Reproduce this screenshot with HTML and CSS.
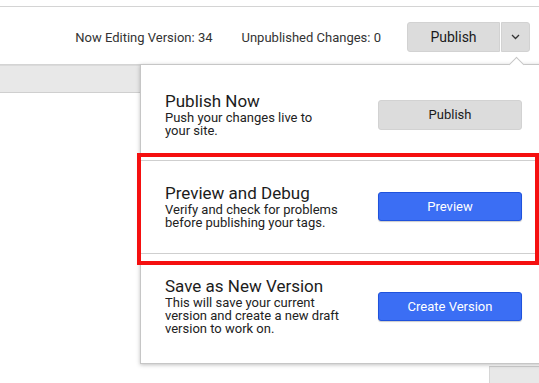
FILE: index.html
```html
<!DOCTYPE html>
<html lang="en">
<head>
  <meta charset="UTF-8" />
  <meta name="viewport" content="width=device-width, initial-scale=1.0"/>
  <title>Publish</title>
  <link rel="stylesheet" href="styles.css">
</head>
<body>
  <div class="page">
    <header class="topbar">
      <span class="status">Now Editing Version: 34</span>
      <span class="status">Unpublished Changes: 0</span>
      <div class="split-button">
        <button class="btn btn-gray btn-main">Publish</button>
        <button class="btn btn-gray btn-caret">
          <svg width="9" height="6" viewBox="0 0 9 6"><polyline points="1,1 4.5,4.5 8,1" fill="none" stroke="#333" stroke-width="1.3"/></svg>
        </button>
      </div>
    </header>

    <div class="toolbar"></div>

    <main class="workspace">
      <div class="side-box"></div>
    </main>

    <div class="publish-menu">
      <span class="menu-arrow"></span>

      <div class="menu-item first">
        <div class="item-text">
          <h3>Publish Now</h3>
          <p>Push your changes live to<br>your site.</p>
        </div>
        <button class="btn btn-gray btn-item tall">Publish</button>
      </div>

      <div class="menu-item second">
        <div class="item-text">
          <h3>Preview and Debug</h3>
          <p>Verify and check for problems<br>before publishing your tags.</p>
        </div>
        <button class="btn btn-blue btn-item">Preview</button>
      </div>

      <div class="menu-item third">
        <div class="item-text">
          <h3>Save as New Version</h3>
          <p>This will save your current<br>version and create a new draft<br>version to work on.</p>
        </div>
        <button class="btn btn-blue btn-item">Create Version</button>
      </div>
    </div>

    <div class="highlight"></div>
  </div>
</body>
</html>
```

FILE: styles.css
```css
* {
  box-sizing: border-box;
}

html, body {
  margin: 0;
  height: 100%;
}

body {
  font-family: Roboto, 'Liberation Sans', sans-serif;
  color: #212121;
  background-color: #ffffff;
  overflow: hidden;
}

.page {
  position: relative;
  height: 383px;
  padding-top: 6px;
  display: flex;
  flex-direction: column;
}

.topbar {
  height: 59px;
  border-top: 1px solid #d4d4d4;
  border-bottom: 1px solid #d4d4d4;
  padding: 3px 9px 0 0;
  display: flex;
  align-items: center;
  justify-content: flex-end;
}

.status {
  font-size: 13px;
  color: #333;
  margin-right: 29px;
}

.status:nth-child(2) {
  margin-right: 26px;
}

.split-button {
  display: flex;
  gap: 1px;
}

.btn {
  font-family: inherit;
  font-size: 13px;
  border-radius: 3px;
  cursor: pointer;
  padding: 0;
}

.btn-gray {
  background-color: #dcdcdc;
  border: 1px solid #d2d2d2;
  color: #1a1a1a;
}

.btn-main {
  width: 93px;
  height: 30px;
  font-size: 14px;
  border-radius: 3px 0 0 3px;
}

.btn-caret {
  width: 29px;
  height: 30px;
  border-radius: 0 3px 3px 0;
  display: flex;
  align-items: center;
  justify-content: center;
}

.toolbar {
  height: 28px;
  border-top: 1px solid #dadada;
  border-bottom: 1px solid #cfcfcf;
  background-color: #e8e8e8;
}

.workspace {
  flex: 1;
  display: flex;
  justify-content: flex-end;
  align-items: flex-end;
}

.side-box {
  width: 50px;
  height: 17px;
  background-color: #e8e8e8;
  border-top: 1px solid #cfcfcf;
  border-left: 1px solid #d6d6d6;
}

/* dropdown */
.publish-menu {
  position: absolute;
  top: 64px;
  left: 140px;
  width: 420px;
  background-color: #fff;
  border: 1px solid #c6c6c6;
  box-shadow: 0 1px 4px rgba(0,0,0,0.25);
}

.menu-arrow {
  position: absolute;
  top: -6px;
  left: 370px;
  width: 11px;
  height: 11px;
  background-color: #fff;
  border-top: 1px solid #c6c6c6;
  border-left: 1px solid #c6c6c6;
  transform: rotate(45deg);
}

.menu-item {
  display: grid;
  grid-template-columns: 213px 144px;
  align-items: center;
  padding-left: 24px;
}

.menu-item.first {
  padding-top: 27px;
  padding-bottom: 23px;
  border-bottom: 1px solid #cfcfcf;
}

.menu-item.second {
  padding-top: 23px;
  padding-bottom: 24px;
  border-bottom: 1px solid #cfcfcf;
}

.menu-item.third {
  padding-top: 23px;
  padding-bottom: 28px;
}

.item-text h3 {
  margin: 0;
  font-size: 17px;
  font-weight: 400;
  line-height: 19px;
  color: #1c1c1c;
}

.item-text p {
  margin: 0;
  font-size: 13px;
  line-height: 13px;
  color: #222;
}

.btn-item {
  width: 144px;
  height: 29px;
}

.btn-item.tall {
  height: 30px;
}

.btn-blue {
  background-color: #3b6ef4;
  border: 1px solid #1f52dc;
  color: #fff;
  box-shadow: 0 1px 1px rgba(0,0,0,0.2);
}

/* annotation box */
.highlight {
  position: absolute;
  left: 137px;
  top: 153px;
  width: 402px;
  height: 112px;
  border: 4px solid #f50f0f;
}
```
